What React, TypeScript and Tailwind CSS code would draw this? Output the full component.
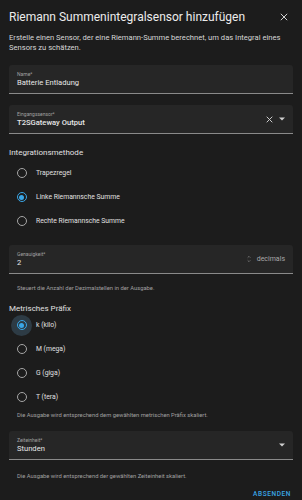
import React from 'react';

function Field({ label, value, right, bold }: { label: string; value: string; right?: React.ReactNode; bold?: boolean }) {
  return (
    <div className="mx-[9px] h-[29px] bg-[#262626] rounded-t-[3px] border-b border-[#8a8a8a] flex items-center pl-[8px] pr-[8px]">
      <div className="flex-1 flex flex-col pt-[1px]">
        <span className="text-[5px] leading-[6px] text-[#a0a0a0]">{label}</span>
        <span className={`text-[7.6px] leading-[11px] text-[#e6e6e6] ${bold ? 'font-medium' : ''}`}>{value}</span>
      </div>
      {right}
    </div>
  );
}

function Radio({ label, checked, halo }: { label: string; checked?: boolean; halo?: boolean }) {
  return (
    <div className="h-[24px] flex items-center pl-[11px]">
      <div className="relative w-[21px] h-[21px] flex items-center justify-center">
        {halo && <div className="absolute inset-0 rounded-full bg-[#2d3b45]" />}
        <div
          className={`relative w-[10px] h-[10px] rounded-full border-[1.5px] flex items-center justify-center ${
            checked ? 'border-[#3aa6e6]' : 'border-[#a6a6a6]'
          }`}
        >
          {checked && <div className="w-[5px] h-[5px] rounded-full bg-[#3aa6e6]" />}
        </div>
      </div>
      <span className="ml-[4px] text-[6.8px] text-[#e0e0e0]">{label}</span>
    </div>
  );
}

function Caret() {
  return (
    <svg width="6" height="4" viewBox="0 0 10 5" className="ml-[6px]">
      <path d="M0 0 L5 5 L10 0 Z" fill="#cfcfcf" />
    </svg>
  );
}

export default function App() {
  return (
    <div
      className="w-[302px] h-[500px] bg-[#1c1c1c] overflow-hidden text-[#e6e6e6]"
      style={{ fontFamily: 'Roboto, "Noto Sans", sans-serif' }}
    >
      <div className="flex items-center justify-between pl-[9px] pr-[14px] pt-[8px] h-[25px]">
        <span className="text-[12px] leading-[16px] text-[#ececec]">Riemann Summenintegralsensor hinzufügen</span>
        <svg width="8" height="8" viewBox="0 0 10 10">
          <path d="M1 1 L9 9 M9 1 L1 9" stroke="#d8d8d8" strokeWidth="1.2" />
        </svg>
      </div>

      <p className="px-[9px] mt-[8px] text-[7.6px] leading-[10px] text-[#d6d6d6]">
        Erstelle einen Sensor, der eine Riemann-Summe berechnet, um das Integral eines Sensors zu schätzen.
      </p>

      <div className="mt-[12px]">
        <Field label="Name*" value="Batterie Entladung" />
      </div>

      <div className="mt-[11px]">
        <Field
          label="Eingangssensor*"
          value="T2SGateway Output"
          bold
          right={
            <div className="flex items-center">
              <svg width="7" height="7" viewBox="0 0 10 10">
                <path d="M1 1 L9 9 M9 1 L1 9" stroke="#cfcfcf" strokeWidth="1.4" />
              </svg>
              <Caret />
            </div>
          }
        />
      </div>

      <div className="px-[9px] mt-[13px] text-[8px] leading-[12px] text-[#e0e0e0]">Integrationsmethode</div>
      <div className="mt-[2px]">
        <Radio label="Trapezregel" />
        <Radio label="Linke Riemannsche Summe" checked />
        <Radio label="Rechte Riemannsche Summe" />
      </div>

      <div className="mt-[12px]">
        <Field
          label="Genauigkeit*"
          value="2"
          right={
            <div className="flex items-center">
              <svg width="4" height="8" viewBox="0 0 6 12">
                <path d="M1 4 L3 2 L5 4 M1 8 L3 10 L5 8" stroke="#8c8c8c" strokeWidth="1" fill="none" />
              </svg>
              <span className="ml-[6px] text-[7px] text-[#a8a8a8]">decimals</span>
            </div>
          }
        />
      </div>
      <div className="px-[17px] mt-[10px] text-[5.8px] leading-[8px] text-[#a0a0a0]">
        Steuert die Anzahl der Dezimalstellen in der Ausgabe.
      </div>

      <div className="px-[9px] mt-[12px] text-[8px] leading-[10px] text-[#e0e0e0]">Metrisches Präfix</div>
      <div className="-mt-[1px]">
        <Radio label="k (kilo)" checked halo />
        <Radio label="M (mega)" />
        <Radio label="G (giga)" />
        <Radio label="T (tera)" />
      </div>
      <div className="px-[17px] mt-[2px] text-[5.8px] leading-[8px] text-[#a0a0a0]">
        Die Ausgabe wird entsprechend dem gewählten metrischen Präfix skaliert.
      </div>

      <div className="mt-[12px]">
        <Field label="Zeiteinheit*" value="Stunden" right={<Caret />} />
      </div>
      <div className="px-[17px] mt-[12px] text-[5.8px] leading-[8px] text-[#a0a0a0]">
        Die Ausgabe wird entsprechend der gewählten Zeiteinheit skaliert.
      </div>

      <div className="flex justify-end pr-[11px] mt-[10px]">
        <span className="text-[6.5px] font-medium tracking-[0.6px] text-[#3aa6e6]">ABSENDEN</span>
      </div>
    </div>
  );
}
